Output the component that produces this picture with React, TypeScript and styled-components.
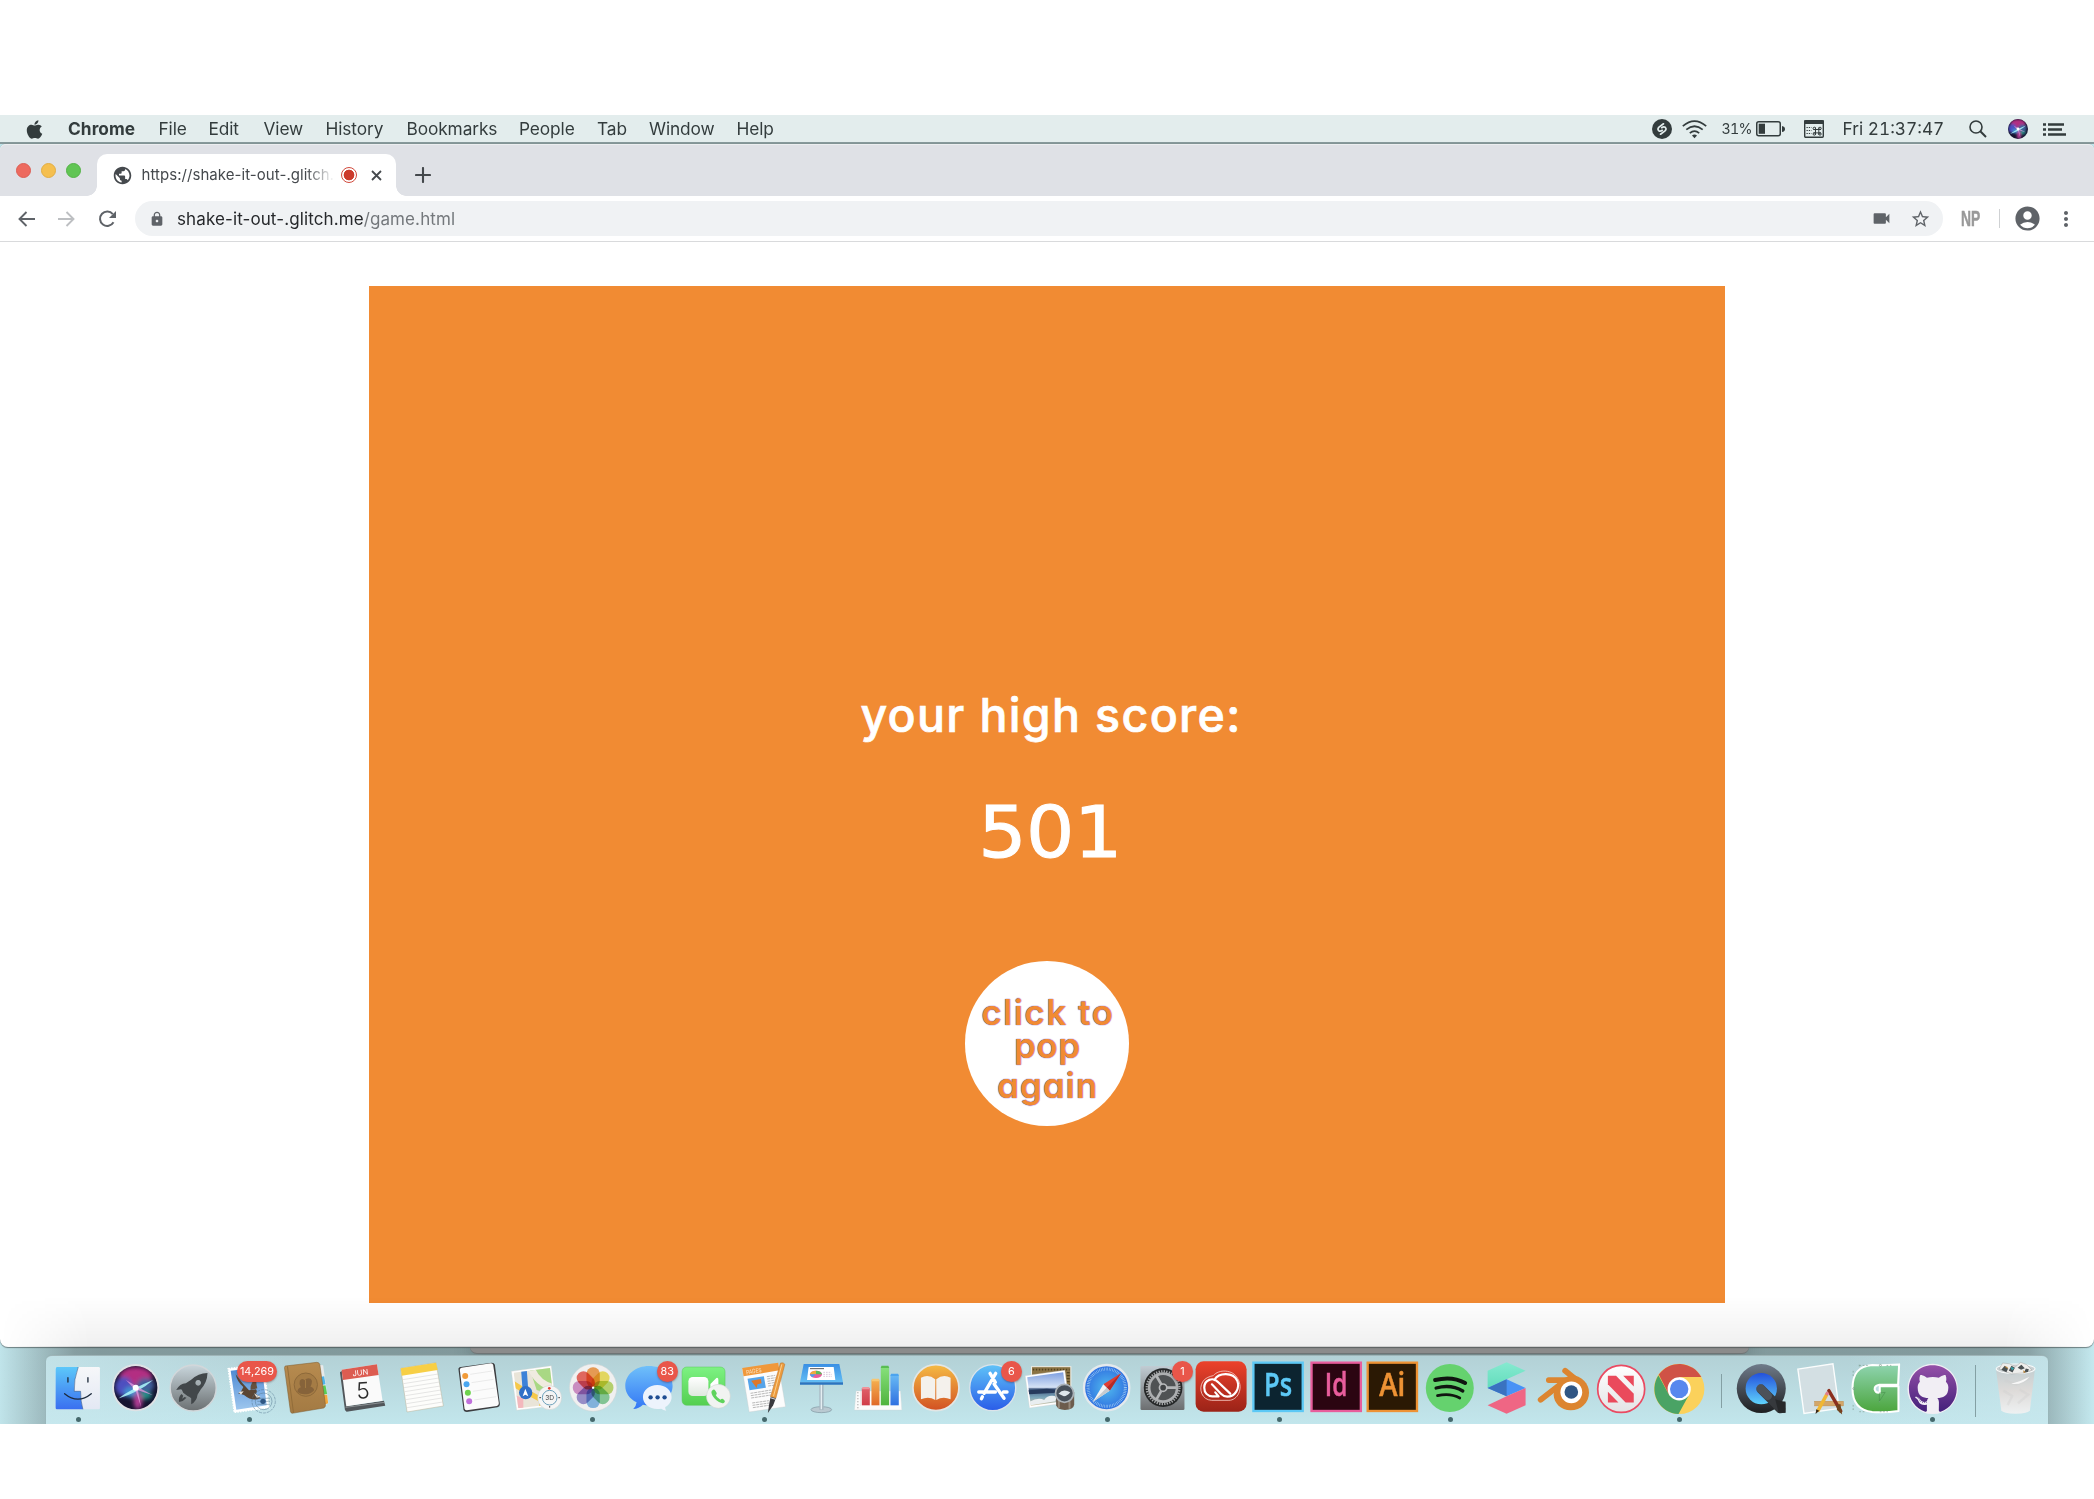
import React from 'react';
import styled, { createGlobalStyle } from 'styled-components';
import { FaApple, FaGithub } from 'react-icons/fa';
import { MdLock, MdVideocam, MdStarBorder, MdAccountCircle, MdMoreVert, MdPublic } from 'react-icons/md';

const Global = createGlobalStyle`
  * { box-sizing: border-box; }
  body { margin: 0; background: #fff; font-family: Inter, "Liberation Sans", sans-serif; }
`;

const Page = styled.main`
  width: 2094px;
  height: 1499px;
  padding-top: 115px;
  overflow: hidden;
  background: #fff;
`;

const Desktop = styled.div`
  height: 1309px;
  overflow: hidden;
  display: flex;
  flex-direction: column;
  background: linear-gradient(90deg, #c0e4ea, #b4dce2 50%, #c4e9ef);
`;

/* ---------- menu bar ---------- */

const MenuBar = styled.header`
  flex: none;
  height: 29px;
  padding: 1px 28px 0 24px;
  display: flex;
  align-items: center;
  background: #e3eded;
  border-bottom: 2px solid #87999b;
  color: #333c3d;
  font-size: 17.3px;
`;

const MenuIcon = styled.div<{ $w: number }>`
  width: ${(p) => p.$w}px;
  height: 26px;
  display: flex;
  align-items: center;
  flex: none;
`;

const MenuItem = styled.span<{ $w: number; $bold?: boolean; $ls?: number; $size?: number }>`
  flex: none;
  width: ${(p) => p.$w}px;
  white-space: nowrap;
  line-height: 26px;
  font-weight: ${(p) => (p.$bold ? 700 : 400)};
  letter-spacing: ${(p) => p.$ls ?? 0}px;
  ${(p) => (p.$size ? `font-size: ${p.$size}px;` : '')}
  font-variant-numeric: tabular-nums;
`;

const Spacer = styled.div`
  flex: 1;
`;

/* ---------- browser window ---------- */

const Window = styled.section`
  flex: none;
  height: 1203px;
  display: flex;
  flex-direction: column;
  background: #fff;
  border-radius: 6px 6px 8px 8px;
  position: relative;
  z-index: 2;
  box-shadow: 0 0.5px 1px rgba(60, 70, 70, 0.6);
`;

const TabStrip = styled.div`
  flex: none;
  height: 52px;
  display: flex;
  align-items: flex-end;
  padding-left: 16px;
  background: #dfe1e6;
  border-radius: 6px 6px 0 0;
  border-top: 1px solid #eceef0;
`;

const Lights = styled.div`
  width: 81px;
  height: 51px;
  display: flex;
  gap: 10px;
  padding-top: 18px;
`;

const Light = styled.i<{ $c: string; $b: string }>`
  width: 15px;
  height: 15px;
  border-radius: 50%;
  background: ${(p) => p.$c};
  border: 1px solid ${(p) => p.$b};
`;

const Tab = styled.div`
  width: 299px;
  height: 42px;
  position: relative;
  display: flex;
  align-items: center;
  padding-left: 14.5px;
  background: #fff;
  border-radius: 10px 10px 0 0;
  color: #45494d;
  &::before,
  &::after {
    content: '';
    position: absolute;
    bottom: 0;
    width: 10px;
    height: 10px;
  }
  &::before {
    left: -10px;
    background: radial-gradient(circle at 0 0, transparent 9.5px, #fff 10px);
  }
  &::after {
    right: -10px;
    background: radial-gradient(circle at 100% 0, transparent 9.5px, #fff 10px);
  }
`;

const TabTitle = styled.span`
  width: 193px;
  margin-left: 9px;
  white-space: nowrap;
  font-size: 15px;
  line-height: 20px;
  letter-spacing: 0.05px;
  mask-image: linear-gradient(90deg, #000 164px, transparent 192px);
`;

const RecordDot = styled.i`
  width: 16px;
  height: 16px;
  margin: 0 14px 0 6px;
  border-radius: 50%;
  border: 1.5px solid #d14a3c;
  background: radial-gradient(circle, #cc3a2b 5px, #fff 5.7px);
`;

const NewTab = styled.div`
  height: 42px;
  width: 54px;
  display: flex;
  align-items: center;
  justify-content: center;
  color: #44484c;
`;

const Toolbar = styled.div`
  flex: none;
  height: 46px;
  padding: 0 16px 0 18px;
  display: flex;
  align-items: center;
  border-bottom: 1px solid #d9dadc;
  color: #5f6368;
`;

const ToolButton = styled.div<{ $w: number; $dim?: boolean }>`
  width: ${(p) => p.$w}px;
  display: flex;
  align-items: center;
  flex: none;
  color: ${(p) => (p.$dim ? '#bdbfc2' : 'inherit')};
`;

const Omnibox = styled.div`
  width: 1808px;
  height: 35px;
  border-radius: 18px;
  background: #f0f2f4;
  display: flex;
  align-items: center;
  padding: 0 12px 0 14px;
`;

const Url = styled.span`
  margin-left: 12px;
  flex: 1;
  font-size: 17px;
  letter-spacing: 0.11px;
  color: #26282b;
  white-space: nowrap;
  em {
    font-style: normal;
    color: #74787c;
  }
`;

const Extension = styled.span`
  margin-left: 18px;
  width: 38px;
  color: #999;
  font: 700 22px 'Liberation Sans', sans-serif;
  -webkit-text-stroke: 0.5px #999;
  span {
    display: inline-block;
    transform: scaleX(0.63);
    transform-origin: 0 50%;
  }
`;

const Divider = styled.i`
  width: 1px;
  height: 19px;
  margin-right: 13px;
  background: #cfd1d3;
`;

const Viewport = styled.div`
  flex: 1;
  padding-top: 43.5px;
  display: flex;
  flex-direction: column;
  align-items: center;
  position: relative;
  &::after {
    content: '';
    position: absolute;
    left: 0;
    right: 0;
    bottom: 0;
    height: 50px;
    border-radius: 0 0 8px 8px;
    border-bottom: 1px solid #cfcfcf;
    background: linear-gradient(rgba(0, 0, 0, 0), rgba(0, 0, 0, 0.06));
    mask-image: linear-gradient(90deg, transparent, #000 90px, #000 2004px, transparent);
  }
`;

const Game = styled.div`
  width: 1356px;
  height: 1017.5px;
  background: #f18b33;
  display: flex;
  flex-direction: column;
  align-items: center;
  color: #fff;
`;

const Heading = styled.h1`
  margin: 399px 0 0 8px;
  font-family: Inter, sans-serif;
  font-size: 46.5px;
  line-height: 60px;
  font-weight: 500;
  letter-spacing: 1.35px;
  -webkit-text-stroke: 0.7px #fff;
  white-space: nowrap;
`;

const Score = styled.p`
  margin: 45px 0 0 6px;
  font-family: 'DejaVu Sans', sans-serif;
  font-size: 71px;
  line-height: 86px;
  font-weight: 400;
  letter-spacing: -0.5px;
  -webkit-text-stroke: 1px #fff;
  transform: scaleX(1.07);
`;

const PopButton = styled.button`
  margin-top: 85.5px;
  width: 164.5px;
  height: 164.5px;
  padding: 35px 0 0;
  border: 0;
  border-radius: 50%;
  background: #fff;
  display: flex;
  flex-direction: column;
  align-items: center;
  color: #f18b33;
  font-family: Inter, sans-serif;
  font-size: 35px;
  font-weight: 600;
  font-feature-settings: 'cv11' 1;
  text-shadow: 0 0 1px #6a50c8, 0 0 1px #8a62b8;
`;

const PopLine = styled.span<{ $h: number; $ls: number }>`
  height: ${(p) => p.$h}px;
  line-height: 32px;
  letter-spacing: ${(p) => p.$ls}px;
  margin-right: -${(p) => p.$ls}px;
  white-space: nowrap;
`;

/* ---------- lower strip: rear window and dock ---------- */

const Shelf = styled.div`
  flex: 1;
  display: flex;
  flex-direction: column;
  align-items: center;
  background: linear-gradient(
      90deg,
      rgba(115, 135, 137, 0) 0,
      rgba(115, 135, 137, 0.75) 75px,
      rgba(115, 135, 137, 0.8) 100px,
      rgba(115, 135, 137, 0.8) 1980px,
      rgba(115, 135, 137, 0.7) 2030px,
      rgba(115, 135, 137, 0) 2094px
    );
`;

const RearWindow = styled.div`
  flex: none;
  width: 1279px;
  height: 7px;
  margin: 0 0 1px 125px;
  background: #8b8b8b;
  border-radius: 0 0 7px 7px;
  border-bottom: 1px solid #6f7475;
  box-shadow: 0 0 16px rgba(40, 50, 50, 0.6);
`;

const DockRow = styled.nav`
  flex: none;
  width: 2002px;
  height: 69px;
  padding-left: 3.4px;
  display: flex;
  border-radius: 6px 6px 0 0;
  border-top: 1px solid #9fb5b8;
  background: linear-gradient(90deg, rgba(200, 232, 238, 0.7), transparent 12%, transparent 90%, rgba(200, 232, 238, 0.7)),
    linear-gradient(#b3d1d6, #c2e6ec);
  box-shadow: 0 0 1px #8aa3a6;
`;

const Cell = styled.div`
  position: relative;
  flex: none;
  width: 57.2px;
  height: 68.67px;
  svg {
    display: block;
    overflow: visible;
  }
`;

const RunningDot = styled.i`
  position: absolute;
  left: 26.3px;
  bottom: 2.5px;
  width: 5px;
  height: 5px;
  border-radius: 50%;
  background: #45686c;
`;

const Badge = styled.span<{ $x: number; $w: number }>`
  position: absolute;
  left: ${(p) => p.$x}px;
  top: 4.5px;
  width: ${(p) => p.$w}px;
  height: 21px;
  border-radius: 11px;
  background: #e9564a;
  color: #fff;
  font-size: 10.8px;
  line-height: 21.5px;
  text-align: center;
  box-shadow: 0 1px 2px rgba(80, 0, 0, 0.35);
`;

const DockRule = styled.div<{ $w: number; $x: number; $top: number; $h: number }>`
  flex: none;
  width: ${(p) => p.$w}px;
  padding: ${(p) => p.$top}px 0 0 ${(p) => p.$x}px;
  &::before {
    content: '';
    display: block;
    width: 1px;
    height: ${(p) => p.$h}px;
    background: #84a0a4;
  }
`;

type Stop = [string, string];
const Lin = ({ id, s }: { id: string; s: Stop[] }) => (
  <linearGradient id={id} x1="0" y1="0" x2="0" y2="1">
    {s.map(([o, c]) => <stop key={o} offset={o} stopColor={c} />)}
  </linearGradient>
);
const Rad = ({ id, s }: { id: string; s: Stop[] }) => (
  <radialGradient id={id}>
    {s.map(([o, c]) => <stop key={o} offset={o} stopColor={c} />)}
  </radialGradient>
);

const Finder = () => (
  <>
    <Lin id="fa" s={[['0', '#5cc8fa'], ['1', '#3a6ff0']]} />
    <Lin id="fb" s={[['0', '#f6f7f9'], ['1', '#e3e8f4']]} />
    <rect x="168" y="111" width="133" height="127" rx="4" fill="url(#fb)" />
    <path d="M172 111H236Q222 150 224 184H243Q243 215 250 238H172Q168 238 168 233V116Q168 111 172 111Z" fill="url(#fa)" />
    <path d="M236 111Q222 150 224 184H243Q243 215 250 238" fill="none" stroke="#2c4a78" strokeWidth="1.5" />
    <path d="M205 143v13M265 143v13M195 191Q235 224 275 191" fill="none" stroke="#1d2a3c" strokeWidth="4" strokeLinecap="round" />
  </>
);

const Orb = ({ cx, cy, r, id }: { cx: number; cy: number; r: number; id: string }) => (
  <>
    <clipPath id={id + 'c'}><circle cx={cx} cy={cy} r={r} /></clipPath>
    <filter id={id + 'f'} x="-50%" y="-50%" width="200%" height="200%"><feGaussianBlur stdDeviation={r * 0.1} /></filter>
    <circle cx={cx} cy={cy} r={r} fill="#15132f" />
    <g clipPath={`url(#${id}c)`}>
      <g filter={`url(#${id}f)`}>
        <ellipse cx={cx} cy={cy - r * 0.5} rx={r * 0.75} ry={r * 0.45} fill="#b32d82" />
        <ellipse cx={cx - r * 0.55} cy={cy - r * 0.05} rx={r * 0.4} ry={r * 0.45} fill="#4d4fc0" />
        <ellipse cx={cx + r * 0.45} cy={cy - r * 0.1} rx={r * 0.4} ry={r * 0.35} fill="#3f5f9c" />
        <ellipse cx={cx - r * 0.2} cy={cy + r * 0.2} rx={r * 0.35} ry={r * 0.25} fill="#3f8fd0" />
        <ellipse cx={cx + r * 0.4} cy={cy + r * 0.35} rx={r * 0.35} ry={r * 0.2} fill="#238b85" />
        <ellipse cx={cx + r * 0.1} cy={cy + r * 0.6} rx={r * 0.2} ry={r * 0.4} fill="#b33c95" />
      </g>
      <path d={`M${cx - r * 0.8} ${cy + r * 0.5}Q${cx - r * 0.2} ${cy + r * 0.05} ${cx + r * 0.8} ${cy - r * 0.35}Q${cx + r * 0.2} ${cy + r * 0.2} ${cx - r * 0.8} ${cy + r * 0.5}Z`} fill="#a8f1f7" opacity="0.9" />
      <path d={`M${cx - r * 0.45} ${cy - r * 0.35}L${cx + r * 0.15} ${cy}L${cx + r * 0.8} ${cy + r * 0.35}L${cx + r * 0.1} ${cy + r * 0.12}L${cx + r * 0.25} ${cy + r * 0.9}L${cx - r * 0.02} ${cy + r * 0.1}Z`} fill="#e79be0" opacity="0.75" />
      <circle cx={cx} cy={cy} r={r * 0.14} fill="#fff" />
    </g>
  </>
);

const Siri = () => (
  <>
    <circle cx="406" cy="173" r="71" fill="#dfe2e5" />
    <Orb cx={406} cy={173} r={65} id="so" />
  </>
);

const Launchpad = () => (
  <>
    <Lin id="la" s={[['0', '#c9d6dc'], ['1', '#6b7072']]} />
    <circle cx="579" cy="174" r="69" fill="url(#la)" stroke="#d2d7da" strokeWidth="4" />
    <path fillRule="evenodd" d="M622 129Q594 130 573 149L557 160Q539 161 528 180L543 178Q546 180 549 188L562 198Q569 201 573 205L573 223Q590 213 592 194L602 178Q621 157 622 129ZM594 150A8.500 8.500 0 1 1 593.900 150Z" fill="#42474a" />
    <path d="M544 192Q533 203 537 216Q550 214 559 203L553 201L546 206L549 197Z" fill="#42474a" />
  </>
);

const Mail = () => (
  <>
    <Lin id="ma" s={[['0', '#4a86d2'], ['1', '#9dc6ee']]} />
    <path d="M685 116L790 103L807 233L703 247Z" fill="#fff" stroke="#fff" strokeWidth="5" strokeDasharray="5 3" />
    <path d="M692 122L785 111L800 226L709 239Z" fill="url(#ma)" />
    <path d="M707 133Q712 157 730 171L722 187L714 190L732 195Q757 216 782 205L768 191Q773 184 768 178L747 181Q726 160 707 133Z" fill="#5a4533" />
    <path d="M752 180Q749 160 769 145Q768 162 772 175Z" fill="#65503e" />
    <path d="M716 186l15-2-8 10zM762 190l20 11-12 2z" fill="#e9e2d8" />
    <g fill="none" stroke="#53768f" strokeWidth="2.500" opacity="0.6">
      <circle cx="791" cy="214" r="35" strokeDasharray="9 3" />
      <circle cx="791" cy="214" r="25" />
      <path d="M772 205h38M772 214h38M772 223h38" />
    </g>
    <circle cx="789" cy="214" r="8" fill="#2f5683" />
  </>
);

const Contacts = () => (
  <>
    <Lin id="ca" s={[['0', '#b78b4f'], ['1', '#a37a43']]} />
    <path d="M955 105L970 106L986 220L965 232Z" fill="#e8eaea" />
    <path d="M961 141l12-2 4 24-12 2z" fill="#4db4ea" />
    <path d="M965 168l12-2 5 26-13 2z" fill="#58ce57" />
    <path d="M969 195l13-1 3 26-12 4z" fill="#f2a83c" />
    <path d="M856 108L951 97Q958 97 960 103L977 224Q978 231 972 234L877 250Q873 249 872 245L854 113Z" fill="url(#ca)" stroke="#7c5a2d" strokeWidth="1.5" />
    <path d="M863 109L881 248" stroke="#8d6936" strokeWidth="2.500" />
    <circle cx="918" cy="164" r="35" fill="#a57c45" stroke="#8e693a" strokeWidth="3" />
    <path d="M893 186Q893 175 903 172Q897 160 900 152Q906 142 915 151Q922 142 932 146Q941 151 932 170Q943 173 943 181Q932 193 919 193Q903 194 893 186Z" fill="#86633a" />
    <path d="M917 150v24" stroke="#a57c45" strokeWidth="3" />
  </>
);

const Calendar = () => (
  <>
    <path d="M1021 127L1030 120L1044 228L1153 212L1157 227L1041 245L1036 240Z" fill="#51565a" />
    <path d="M1038 232L1155 217" stroke="#a8adaf" strokeWidth="2" />
    <path d="M1026 119L1132 103L1149 212L1040 229Z" fill="#fafafa" />
    <path d="M1026 119L1132 103L1137 135L1030 150Z" fill="#dc5c51" />
    <g fontFamily="Inter, sans-serif" textAnchor="middle">
      <text x="1082" y="136" fontSize="23" fill="#fff" transform="rotate(-6 1082 128)">JUN</text>
      <text x="1090" y="206" fontSize="68" fontWeight="300" fill="#2c2c2c" transform="rotate(-4 1090 182)">5</text>
    </g>
  </>
);

const Notes = () => (
  <>
    <path d="M31 115L137 98L159 228L50 246Z" fill="#fdfdfb" stroke="#b8b095" strokeWidth="1.5" />
    <path d="M31 115L137 98L142 120L34 137Z" fill="#f7cf45" />
    <path d="M37 149l107-17M39 161l107-17M41 173l107-17M43 185l107-17M45 197l107-17M46 209l107-17M48 221l107-17M50 233l107-17" stroke="#cdcdcd" strokeWidth="1.5" />
  </>
);

const Reminders = () => (
  <>
    <path d="M205 120Q203 112 212 111L305 98Q312 98 314 104L329 223Q329 230 322 232L230 246Q222 246 220 240Z" fill="#3c3d40" />
    <path d="M209 121Q207 115 214 113L302 100Q308 100 309 105L326 220Q326 226 320 228L230 241Q225 241 223 236Z" fill="#fbfbfb" />
    <path d="M240 133l66-10M244 158l66-10M248 184l66-10M252 210l66-10" stroke="#d8d8d8" strokeWidth="1.500" />
    <circle cx="225" cy="138" r="9" fill="#f19a38" /><circle cx="229" cy="163" r="9" fill="#4aa6f0" />
    <circle cx="233" cy="188" r="9" fill="#6fd24e" /><circle cx="237" cy="214" r="9" fill="#c070dc" />
  </>
);

const Maps = () => (
  <>
    <clipPath id="mp"><path d="M371 128L480 114L492 222L385 235Z" /></clipPath>
    <path d="M364 124L484 107L498 227L380 241Z" fill="#fdfdfd" stroke="#cfcfc8" strokeWidth="1" />
    <g clipPath="url(#mp)">
      <rect x="360" y="100" width="140" height="145" fill="#e9e4d8" />
      <path d="M415 105H500V200L440 180Z" fill="#a9d884" />
      <path d="M420 105Q440 165 500 175" fill="none" stroke="#f0ebe0" strokeWidth="20" />
      <path d="M368 160L400 180L455 210V245" fill="none" stroke="#f6c94a" strokeWidth="16" />
      <path d="M375 195L400 205V245H375Z" fill="#f3b8bd" />
      <path d="M401 108L407 190" stroke="#3d82d8" strokeWidth="17" />
    </g>
    <circle cx="407" cy="188" r="20" fill="#2f70c8" />
    <path d="M406 176l9 23-9-5-8 5z" fill="#fff" />
    <circle cx="479" cy="203" r="36" fill="#f5f5f5" stroke="#c7cccd" strokeWidth="1.500" />
    <circle cx="479" cy="203" r="22" fill="none" stroke="#6a9fba" strokeWidth="3" />
    <circle cx="478" cy="175" r="4" fill="#e03a2f" />
    <path d="M448 203h5M505 203h5M479 228v5" stroke="#444" strokeWidth="3" />
    <text x="479" y="210" fontSize="20" textAnchor="middle" fill="#444" fontFamily="Inter, sans-serif">3D</text>
  </>
);

const PhotoPetal = styled.rect`
  mix-blend-mode: multiply;
`;
const petals = ['#f3943a', '#efe04a', '#b4d65a', '#77c98c', '#74b0e6', '#9183cc', '#cf84c4', '#ea5348'];
const Photos = () => (
  <>
    <circle cx="610" cy="173" r="71" fill="#f0f0f0" stroke="#d0d2d3" strokeWidth="1.500" />
    {petals.map((c, i) => (
      <PhotoPetal key={c} x="590" y="112" width="40" height="60" rx="19" fill={c} opacity="0.85" transform={`rotate(${i * 45} 610 173)`} />
    ))}
    <circle cx="610" cy="173" r="3.500" fill="#fff" />
  </>
);

const Messages = () => (
  <>
    <Lin id="me" s={[['0', '#6fc0fa'], ['1', '#3377f5']]} />
    <path d="M778 108C820 108 849 134 849 167C849 200 818 226 778 226Q768 226 760 224Q748 236 731 237Q740 228 741 217C720 206 707 189 707 167C707 134 738 108 778 108Z" fill="url(#me)" />
    <path d="M803 165C828 165 846 181 846 201C846 214 839 225 827 231Q826 238 830 242Q821 241 815 236Q809 237 803 237C779 237 760 221 760 201C760 181 779 165 803 165Z" fill="#edf3fc" />
    <circle cx="783" cy="202" r="6.500" fill="#1f4d92" /><circle cx="804" cy="202" r="6.500" fill="#1f4d92" /><circle cx="825" cy="202" r="6.500" fill="#1f4d92" />
  </>
);

const FaceTime = () => (
  <>
    <Lin id="ft" s={[['0', '#7df283'], ['1', '#54cf50']]} />
    <Lin id="fw" s={[['0', '#ffffff'], ['1', '#dfe8df']]} />
    <rect x="878" y="111" width="129" height="115" rx="14" fill="url(#ft)" stroke="#5cc65c" strokeWidth="1.500" />
    <rect x="897" y="141" width="60" height="57" rx="13" fill="url(#fw)" />
    <path d="M963 162L981 144Q987 142 987 150V190H963Z" fill="#fff" />
    <circle cx="987" cy="199" r="36" fill="#f1f3f1" stroke="#c9cecb" strokeWidth="1.500" />
    <path d="M970 180Q974 176 978 182L982 189Q983 193 979 195Q982 203 993 209Q997 205 1001 207L1006 212Q1008 216 1003 219Q994 222 981 211Q967 199 966 187Q966 183 970 180Z" fill="#5fd35c" />
  </>
);

const Pages = () => (
  <>
    <path d="M1056 117L1164 100L1186 230L1077 246Z" fill="#fcfcfc" stroke="#c9c9c9" strokeWidth="1" />
    <path d="M1056 114L1164 98L1168 121L1060 139Z" fill="#f0983a" />
    <text x="1091" y="130" fontSize="18" textAnchor="middle" fill="#fbe3c4" fontFamily="Inter, sans-serif" transform="rotate(-9 1091 124)" textLength="46" lengthAdjust="spacingAndGlyphs">PAGES</text>
    <path d="M1072 146L1121 139L1127 173L1078 181Z" fill="#55a4ea" />
    <path d="M1083 152L1112 147L1114 160L1102 163L1099 174L1091 163Z" fill="#e0782a" />
    <path d="M1130 140l25-4M1131 147l25-4M1132 154l24-4M1133 161l24-4M1134 168l21-3M1081 190l62-10M1082 197l62-10M1083 204l60-9M1086 219l50-7M1087 226l50-7M1088 233l48-7" stroke="#aaa" strokeWidth="2.500" strokeDasharray="9 2" />
    <path d="M1171 99Q1180 96 1184 103L1157 205L1141 200Z" fill="#ec9a3c" stroke="#b5702a" strokeWidth="1.5" />
    <path d="M1175 103L1150 199" stroke="#fbd08f" strokeWidth="3" />
    <path d="M1141 200L1157 205L1149 226L1133 249L1137 222Z" fill="#3a3a3e" />
    <path d="M1140 203l16 5" stroke="#ddd" strokeWidth="3" />
  </>
);

const Keynote = () => (
  <>
    <Lin id="ky" s={[['0', '#3a8fe4'], ['1', '#62bdf4']]} />
    <ellipse cx="124" cy="239" rx="31" ry="9" fill="#b9c9d1" stroke="#7f95a0" strokeWidth="2" />
    <path d="M118 160h13v80h-13z" fill="#a9bac3" /><path d="M122 162h4v76h-4z" fill="#e5eef2" />
    <path d="M71 102H178L189 157H60Z" fill="url(#ky)" /><path d="M60 157H189V164H60Z" fill="#2b74c0" />
    <path d="M86 111H161L166 150H81Z" fill="#fff" />
    <path d="M90 116h42" stroke="#555" strokeWidth="3" />
    <ellipse cx="108" cy="133" rx="18" ry="11" fill="#ea5c9c" /><path d="M108 133L90 133Q92 122 108 122Z" fill="#efaa3d" /><path d="M108 133V122Q124 123 126 133Z" fill="#5bbd5a" /><path d="M108 133L97 142Q90 138 90 133Z" fill="#4aa0ee" />
    <path d="M130 127h24M130 133h26M130 139h26" stroke="#d9c9dc" strokeWidth="3" strokeDasharray="5 3" />
  </>
);

const Numbers = () => (
  <>
    <Lin id="n1" s={[['0', '#e0606a'], ['1', '#d03c48']]} /><Lin id="n2" s={[['0', '#f5b050'], ['1', '#e06a28']]} />
    <Lin id="n3" s={[['0', '#86e07c'], ['1', '#50b33e']]} /><Lin id="n4" s={[['0', '#68baf5'], ['1', '#2f70e0']]} />
    <path d="M229 183H362L366 240H224Z" fill="#fbfbfb" stroke="#d3d8d9" strokeWidth="1" />
    <path d="M234 187v50" stroke="#b7b7b7" strokeWidth="5" strokeDasharray="3 6" /><path d="M242 184v44" stroke="#ccc" strokeWidth="1" />
    <rect x="246" y="174" width="24" height="52" fill="url(#n1)" /><path d="M248 171h20l2 7h-24z" fill="#ef939a" />
    <rect x="275" y="149" width="24" height="77" fill="url(#n2)" /><path d="M277 146h20l2 8h-24z" fill="#f7c673" />
    <rect x="303" y="111" width="25" height="115" fill="url(#n3)" /><path d="M305 107h21l2 7h-25z" fill="#59bd53" />
    <rect x="332" y="134" width="25" height="92" fill="url(#n4)" /><path d="M334 131h21l2 7h-25z" fill="#4ca4ee" />
  </>
);

const Books = () => (
  <>
    <Lin id="bk" s={[['0', '#f5bb44'], ['1', '#d25022']]} />
    <circle cx="469" cy="173" r="69" fill="url(#bk)" stroke="#e2e6e5" strokeWidth="5" />
    <path d="M467 148Q447 131 424 143V208Q447 198 467 210Z" fill="#f4f1ec" />
    <path d="M470 148Q490 131 513 143V208Q490 198 470 210Z" fill="#f4f1ec" />
  </>
);

const AppStore = () => (
  <>
    <Lin id="as" s={[['0', '#5fc3f8'], ['1', '#2a5ce8']]} />
    <circle cx="640" cy="173" r="69" fill="url(#as)" stroke="#dbe4ea" strokeWidth="4" />
    <g stroke="#fff" strokeWidth="10" strokeLinecap="round" fill="none">
      <path d="M632 130L648 157M649 130L614 190M609 200L606 206M644 162L674 205M598 186H648M672 186H683" />
    </g>
  </>
);

const Preview = () => (
  <>
    <Lin id="pv" s={[['0', '#7e9fe0'], ['0.45', '#d5e2f5'], ['0.5', '#41587e'], ['0.75', '#7aa5b9'], ['1', '#d8c9a6']]} />
    <rect x="754" y="110" width="118" height="112" fill="#8a7344" stroke="#f1efe8" strokeWidth="3" />
    <path d="M758 119h110M862 126v70M866 126v70" stroke="#53421f" strokeWidth="5" strokeDasharray="4 5" />
    <path d="M735 137L854 121L867 217L748 234Z" fill="#fff" stroke="#cfcfcf" strokeWidth="1" />
    <path d="M741 142L849 127L861 212L752 227Z" fill="url(#pv)" />
    <path d="M745 181L800 176L857 182V187L747 193Z" fill="#263a5c" />
    <path d="M748 215Q775 200 792 210Q804 192 830 200L825 214L752 226Z" fill="#e9eef0" />
    <path d="M827 189L828 226Q832 240 854 240Q880 239 882 224V186Z" fill="#6c5c4d" />
    <path d="M836 210v25M868 211v25" stroke="#96897a" strokeWidth="6" />
    <circle cx="853" cy="190" r="27" fill="#47505a" stroke="#aab1b7" strokeWidth="5" />
    <path d="M835 191Q849 174 870 187Q862 198 851 199Z" fill="#dde6ec" />
  </>
);

const Safari = () => (
  <>
    <Rad id="sa" s={[['0', '#50b9ee'], ['1', '#2f6fe0']]} />
    <circle cx="980" cy="173" r="68" fill="url(#sa)" stroke="#e4e9ec" strokeWidth="7" />
    <circle cx="980" cy="173" r="56" fill="none" stroke="#a5d0f3" strokeWidth="9" strokeDasharray="1.600 3.300" />
    <path d="M1023 130L970 163L989 182Z" fill="#df3f34" /><path d="M1023 130L980 173L989 182Z" fill="#b52a26" />
    <path d="M938 216L970 163L989 182Z" fill="#f3f3f3" /><path d="M938 216L980 173L989 182Z" fill="#c5cbd0" />
  </>
);

const Preferences = () => (
  <>
    <Lin id="pr" s={[['0', '#c1ccd3'], ['1', '#6c6e70']]} />
    <rect x="1082" y="108" width="132" height="132" rx="4" fill="url(#pr)" />
    <circle cx="1150" cy="173" r="58" fill="#262829" />
    <circle cx="1150" cy="173" r="49" fill="none" stroke="#a6a8aa" strokeWidth="7" strokeDasharray="4 3.700" />
    <circle cx="1150" cy="173" r="42" fill="#4f5254" stroke="#acaeb0" strokeWidth="8" />
    <path d="M1150 173L1190 173M1150 173L1130 138M1150 173L1130 208" stroke="#b3b5b7" strokeWidth="8" />
    <circle cx="1150" cy="173" r="11" fill="#414446" stroke="#b8babc" strokeWidth="5" />
  </>
);

const CreativeCloud = () => (
  <>
    <Lin id="cc" s={[['0', '#ec422b'], ['1', '#9b2318']]} />
    <rect x="78" y="94" width="153" height="151" rx="24" fill="url(#cc)" />
    <path d="M131 137C147 117 190 118 204 145C223 177 203 211 178 211H126C97 210 86 177 99 156C105 145 119 139 131 137Z" fill="none" stroke="#f7cfc8" strokeWidth="2.500" />
    <path d="M137 187L147 199H128C114 199 104 188 104 173C104 150 130 139 146 157L182 191M134 150C148 127 190 126 203 152C212 176 196 200 173 200C164 200 159 196 154 191L127 163" fill="none" stroke="#fff" strokeWidth="6.500" strokeLinecap="round" strokeLinejoin="round" />
  </>
);

const Adobe = ({ x, t, c, bg, w }: { x: number; t: string; c: string; bg: string; w: number }) => (
  <>
    <rect x={x + 3} y="98" width="148" height="145" fill={bg} stroke={c} strokeWidth="7" />
    <text x={x + 77} y="199" fontSize="98" fontWeight="600" textAnchor="middle" fill={c} stroke={c} strokeWidth="1.500" fontFamily="'Open Sans', 'Noto Sans', sans-serif" textLength={w} lengthAdjust="spacingAndGlyphs">{t}</text>
  </>
);

const Spotify = () => (
  <>
    <circle cx="840" cy="174" r="72" fill="#65d26e" />
    <g fill="none" stroke="#101510" strokeLinecap="round">
      <path d="M796 150Q847 137 886 159" strokeWidth="12" />
      <path d="M799 174Q844 162 879 183" strokeWidth="10" />
      <path d="M803 197Q841 188 870 204" strokeWidth="8" />
    </g>
  </>
);

const SparkAR = () => (
  <>
    <Lin id="sp" s={[['0', '#86ead0'], ['1', '#62dcbc']]} />
    <path d="M1011 97L1068 122L1011 148L954 174V122Z" fill="url(#sp)" />
    <path d="M1011 148L1068 174L1011 199L954 174Z" fill="#4892f5" /><path d="M1011 148V199L954 174Z" fill="#3a72c0" />
    <path d="M1068 174V226L1011 251L954 226L1011 199Z" fill="#ef6684" />
  </>
);

/* Artwork drawn on the slightly smaller grid, brought up to dock scale. */
const Grown = ({ children }: { children: React.ReactNode }) => <g transform="scale(1.0217)">{children}</g>;

const Blender = () => (
  <Grown>
    <g stroke="#dc8530" strokeWidth="17" strokeLinecap="round" fill="none">
      <path d="M17 120L60 155M-31 147H33M-55 205L10 154" />
    </g>
    <path d="M34 132C66 134 87 157 87 184C87 213 63 236 33 236C4 236 -16 214 -17 190Q-14 160 10 143Z" fill="#dc8530" />
    <circle cx="35" cy="183" r="32" fill="#fff" /><circle cx="35" cy="182" r="20" fill="#305684" />
  </Grown>
);

const News = () => (
  <Grown>
    <Lin id="nw" s={[['0', '#ffffff'], ['1', '#e3e3e5']]} />
    <circle cx="182" cy="173" r="69" fill="url(#nw)" stroke="#ea4a62" strokeWidth="5" />
    <path d="M143 134H167L219 187V213H195L143 159Z" fill="#ea4a5c" />
    <path d="M188 134H219V166ZM143 181V213H174Z" fill="#ea4a5c" />
  </Grown>
);

const Chrome = () => (
  <Grown>
    <circle cx="350" cy="173" r="74" fill="#fbd15b" />
    <path d="M350 173V138H415A74 74 0 0 0 290 131L320 190Z" fill="#cf5246" />
    <path d="M289 133A74 74 0 0 0 348 247L379 190L350 173L320 190Z" fill="#4aa365" />
    <circle cx="350" cy="173" r="34" fill="#fff" /><circle cx="350" cy="173" r="27" fill="#5788ee" />
  </Grown>
);

const QuickTime = () => (
  <Grown>
    <Lin id="qt" s={[['0', '#6f7b8a'], ['1', '#1d1e20']]} />
    <Lin id="qb" s={[['0', '#2350dc'], ['1', '#5fd2fb']]} />
    <circle cx="591" cy="172" r="72" fill="url(#qt)" />
    <path d="M630 210H662V243H640L606 210Z" fill="#252628" />
    <circle cx="591" cy="172" r="46" fill="url(#qb)" />
    <path d="M590 173L648 231" stroke="#36393d" strokeWidth="27" strokeLinecap="round" />
    <path d="M632 203L662 213V243H642Z" fill="#26282a" />
    <path d="M589 172L610 193" stroke="#5b646d" strokeWidth="25" strokeLinecap="round" opacity="0.6" />
  </Grown>
);

const Applications = () => (
  <Grown>
    <path d="M699 115L802 99L820 230L717 245Z" fill="#d3dfe3" stroke="#fbfdfd" strokeWidth="4" />
    <rect x="748" y="209" width="85" height="14" fill="#d3a669" stroke="#b58445" strokeWidth="1" />
    <path d="M790 178L825 238" stroke="#8c2e1d" strokeWidth="10" strokeLinecap="round" /><path d="M812 220l12-3 5 31-15-13z" fill="#70451f" />
    <path d="M784 189L757 239" stroke="#f0b733" strokeWidth="10" /><path d="M787 183l-4 8" stroke="#e17e8a" strokeWidth="10" /><path d="M751 247l2-14 9 4z" fill="#3a2b1c" />
  </Grown>
);

const Glyphs = () => (
  <Grown>
    <Lin id="gl" s={[['0', '#8fd4b0'], ['1', '#4ba53c']]} />
    <path d="M997 101L994 160L939 161Q925 163 925 174Q928 186 940 184V165H995V238Q960 243 918 241C875 236 860 210 860 172C860 129 877 106 918 103Q950 104 997 101Z" fill="url(#gl)" stroke="#fff" strokeWidth="6" strokeLinejoin="round" />
    <path d="M939 185V209L956 183Z" fill="none" stroke="#448b4a" strokeWidth="1.500" />
    <g fill="none" stroke="#7d9c8d" strokeWidth="2"><circle cx="942" cy="104" r="3" /><path d="M880 102v6M880 104h28M862 120v20M862 220v18M880 240h20M940 240h24M960 104h14M939 209v3" strokeDasharray="5 5" /><circle cx="864" cy="172" r="3" /></g>
  </Grown>
);

const GitHub = () => (
  <Grown>
    <Lin id="gh" s={[['0', '#9550a8'], ['1', '#43207a']]} />
    <circle cx="1096" cy="173" r="74" fill="#f1eef4" />
    <FaGithub x={1024} y={101} size={145} fill="url(#gh)" />
  </Grown>
);

const Trash = () => (
  <Grown>
    <Lin id="tr" s={[['0', '#c3ced1'], ['0.5', '#dedbd9'], ['1', '#eef1f2']]} />
    <path d="M1280 113L1296 236Q1301 246 1338 246Q1375 246 1380 236L1395 113Z" fill="url(#tr)" />
    <ellipse cx="1338" cy="114" rx="57" ry="14" fill="#c9d0d2" stroke="#f8fafa" strokeWidth="3" />
    <path d="M1290 114L1300 97L1319 99L1338 108L1353 95L1371 102L1386 118L1360 126L1325 129Z" fill="#eeeeec" stroke="#888" strokeWidth="1" />
    <path d="M1296 117l10-12 10 8-5 11zM1318 119l8-14 10 6-7 14zM1344 111l11-9 10 10-11 5zM1368 113l9 2-3 8-11 2z" fill="#4b5254" />
    <path d="M1304 107l9 1 4 7zM1360 118l8 5-6 4z" fill="#b8843a" /><path d="M1324 108l10 4-7 7z" fill="#35a4aa" />
    <path d="M1306 148L1340 160L1380 142M1302 178L1328 194L1315 220M1350 175L1375 190L1345 215" stroke="#cfcecd" strokeWidth="7" fill="none" opacity="0.35" />
    <path d="M1325 158Q1355 150 1379 137Q1359 162 1325 158Z" fill="#f8f8f8" />
  </Grown>
);

type DockItem = { name: string; x: number; art: React.ReactNode; on?: boolean; badge?: [string, number, number] };

const mainApps: DockItem[] = [
  { name: 'finder', x: 148.2, art: <Finder />, on: true },
  { name: 'siri', x: 319.8, art: <Siri /> },
  { name: 'launchpad', x: 491.4, art: <Launchpad /> },
  { name: 'mail', x: 663, art: <Mail />, on: true, badge: ['14,269', 16, 40] },
  { name: 'contacts', x: 834.6, art: <Contacts /> },
  { name: 'calendar', x: 1006.2, art: <Calendar /> },
  { name: 'notes', x: 7.8, art: <Notes /> },
  { name: 'reminders', x: 179.4, art: <Reminders /> },
  { name: 'maps', x: 351, art: <Maps /> },
  { name: 'photos', x: 522.6, art: <Photos />, on: true },
  { name: 'messages', x: 694.2, art: <Messages />, badge: ['83', 35.5, 21] },
  { name: 'facetime', x: 865.8, art: <FaceTime /> },
  { name: 'pages', x: 1037.4, art: <Pages />, on: true },
  { name: 'keynote', x: 39, art: <Keynote /> },
  { name: 'numbers', x: 210.6, art: <Numbers /> },
  { name: 'books', x: 382.2, art: <Books /> },
  { name: 'appstore', x: 553.8, art: <AppStore />, badge: ['6', 36.5, 21] },
  { name: 'preview', x: 725.4, art: <Preview /> },
  { name: 'safari', x: 897, art: <Safari />, on: true },
  { name: 'preferences', x: 1068.6, art: <Preferences />, badge: ['1', 36, 21] },
  { name: 'creativecloud', x: 70.2, art: <CreativeCloud /> },
  { name: 'photoshop', x: 241.8, art: <Adobe x={249} t="Ps" c="#5cc8f5" bg="#0c2430" w={84} />, on: true },
  { name: 'indesign', x: 413.4, art: <Adobe x={421} t="Id" c="#e85d9c" bg="#2b0511" w={68} /> },
  { name: 'illustrator', x: 585, art: <Adobe x={590} t="Ai" c="#ee9234" bg="#2b1904" w={78} /> },
  { name: 'spotify', x: 756.6, art: <Spotify />, on: true },
  { name: 'spark', x: 928.2, art: <SparkAR /> },
  { name: 'blender', x: -70.2, art: <Blender /> },
  { name: 'news', x: 101.4, art: <News /> },
  { name: 'chrome', x: 273, art: <Chrome />, on: true },
];

const recentApps: DockItem[] = [
  { name: 'quicktime', x: 519, art: <QuickTime /> },
  { name: 'applications', x: 690.6, art: <Applications /> },
  { name: 'glyphs', x: 862.2, art: <Glyphs /> },
  { name: 'github', x: 1033.8, art: <GitHub />, on: true },
];

const DockApp = ({ app }: { app: DockItem }) => (
  <Cell>
    <svg width="57.2" height="68.67" viewBox={`${app.x} 78 171.6 206`}>{app.art}</svg>
    {app.badge && <Badge $x={app.badge[1]} $w={app.badge[2]}>{app.badge[0]}</Badge>}
    {app.on && <RunningDot />}
  </Cell>
);

const menus: [string, number][] = [
  ['File', 50], ['Edit', 55], ['View', 62], ['History', 81], ['Bookmarks', 112.5],
  ['People', 78], ['Tab', 52], ['Window', 87.5], ['Help', 60],
];

export default function App() {
  return (
    <Page>
      <Global />
      <Desktop>
        <MenuBar>
          <MenuIcon $w={44}><FaApple size={21} /></MenuIcon>
          <MenuItem $w={90.5} $bold $ls={0.05}>Chrome</MenuItem>
          {menus.map(([t, w]) => <MenuItem key={t} $w={w} $ls={-0.1}>{t}</MenuItem>)}
          <Spacer />
          <MenuIcon $w={30}>
            <svg width="20" height="20" viewBox="0 0 20 20">
              <circle cx="10" cy="10" r="10" fill="#333c3d" />
              <path d="M11.500 4.800L7 8.100Q5 10 6.800 11.700Q8.300 12.700 10.300 11.300M8.500 15.200L13 11.900Q15 10 13.200 8.300Q11.700 7.300 9.700 8.700" fill="none" stroke="#e3eded" strokeWidth="1.700" strokeLinecap="round" />
            </svg>
          </MenuIcon>
          <MenuIcon $w={39.5}>
            <svg width="25" height="19" viewBox="0 0 25 19" fill="none" stroke="#333c3d" strokeWidth="1.700">
              <path d="M.8 6.200Q12.500-4 24.200 6.200M4.300 9.700Q12.500 2.800 20.700 9.700M7.800 13.200Q12.500 9.200 17.200 13.200" />
              <path d="M10 15.600Q12.500 13.600 15 15.600L12.500 18.200Z" fill="#333c3d" stroke="none" />
            </svg>
          </MenuIcon>
          <MenuItem $w={34.5} $size={14.3} $ls={-0.75}>31%</MenuItem>
          <MenuIcon $w={48}>
            <svg width="29" height="16" viewBox="0 0 29 16">
              <rect x=".75" y=".75" width="23.500" height="14" rx="2" fill="none" stroke="#333c3d" strokeWidth="1.500" />
              <rect x="2.700" y="2.700" width="6.300" height="10.100" fill="#333c3d" /><path d="M26 5q3 .5 3 3t-3 3z" fill="#333c3d" />
            </svg>
          </MenuIcon>
          <MenuIcon $w={38.5}>
            <svg width="20" height="18" viewBox="0 0 20 18" fill="none" stroke="#333c3d">
              <rect x=".7" y=".7" width="18.600" height="16.600" rx="1" strokeWidth="1.400" />
              <path d="M0 2.200H20" strokeWidth="3.600" /><path d="M2.500 7.500h5M2.500 10.500h5M2.500 13.500h5" strokeWidth="1.200" strokeDasharray="1.300 1" />
              <path d="M11.500 7.500v7.400M14.800 7.500v7.400M9.400 9.500h7.600M9.400 12.900h7.600" strokeWidth="1" /><g strokeWidth="1"><circle cx="10.300" cy="8.400" r="1.200" /><circle cx="16" cy="8.400" r="1.200" /><circle cx="10.300" cy="14" r="1.200" /><circle cx="16" cy="14" r="1.200" /></g>
            </svg>
          </MenuIcon>
          <MenuItem $w={126} $ls={0}>Fri 21:37:47</MenuItem>
          <MenuIcon $w={39.5}>
            <svg width="18" height="18" viewBox="0 0 18 18" fill="none" stroke="#333c3d" strokeWidth="1.600">
              <circle cx="7" cy="7" r="6" /><path d="M11.300 11.300L17 17" strokeWidth="2" />
            </svg>
          </MenuIcon>
          <MenuIcon $w={35}><svg width="20" height="20" viewBox="0 0 20 20"><Orb cx={10} cy={10} r={10} id="mb" /></svg></MenuIcon>
          <MenuIcon $w={23}>
            <svg width="23" height="13" viewBox="0 0 23 13" stroke="#333c3d" strokeWidth="2.600">
              <path d="M0 1.500h3M0 6.500h3M0 11.500h3M5 1.500h16M5 6.500h14M5 11.500h18" />
            </svg>
          </MenuIcon>
        </MenuBar>

        <Window>
          <TabStrip>
            <Lights>
              <Light $c="#ed6a5f" $b="#dd5d53" /><Light $c="#f5bf4f" $b="#e2ad43" /><Light $c="#61c554" $b="#53b346" />
            </Lights>
            <Tab>
              <MdPublic size={21} />
              <TabTitle>https://shake-it-out-.glitch.</TabTitle>
              <RecordDot />
              <svg width="11" height="11" viewBox="0 0 11 11" stroke="currentColor" strokeWidth="1.800"><path d="M1 1L10 10M10 1L1 10" /></svg>
            </Tab>
            <NewTab>
              <svg width="16" height="16" viewBox="0 0 16 16" stroke="currentColor" strokeWidth="2.100" strokeLinecap="round"><path d="M8 1V15M1 8H15" /></svg>
            </NewTab>
          </TabStrip>
          <Toolbar>
            <ToolButton $w={40}>
              <svg width="17" height="16" viewBox="0 0 17 16" fill="none" stroke="currentColor" strokeWidth="1.900"><path d="M17 8H1.500M8.500 1L1.500 8L8.500 15" /></svg>
            </ToolButton>
            <ToolButton $w={40} $dim>
              <svg width="17" height="16" viewBox="0 0 17 16" fill="none" stroke="currentColor" strokeWidth="1.900"><path d="M0 8H15.500M8.500 1L15.500 8L8.500 15" /></svg>
            </ToolButton>
            <ToolButton $w={37}>
              <svg width="19" height="18" viewBox="0 0 19 18" fill="none" stroke="currentColor" strokeWidth="2"><path d="M15.500 12.300A7.200 7.200 0 1 1 14.800 4.200" /><path d="M18 1V8H11L18 1Z" fill="currentColor" stroke="none" /></svg>
            </ToolButton>
            <Omnibox>
              <MdLock size={16} />
              <Url>shake-it-out-.glitch.me<em>/game.html</em></Url>
              <ToolButton $w={39.5}><MdVideocam size={21} /></ToolButton>
              <ToolButton $w={21}><MdStarBorder size={22} /></ToolButton>
            </Omnibox>
            <Extension><span>NP</span></Extension>
            <Divider />
            <ToolButton $w={41}><MdAccountCircle size={29} /></ToolButton>
            <MdMoreVert size={24} />
          </Toolbar>
          <Viewport>
            <Game>
              <Heading>your high score:</Heading>
              <Score>501</Score>
              <PopButton>
                <PopLine $h={33} $ls={1.5}>click to</PopLine>
                <PopLine $h={39.5} $ls={0.6}>pop</PopLine>
                <PopLine $h={40} $ls={1}>again</PopLine>
              </PopButton>
            </Game>
          </Viewport>
        </Window>

        <Shelf>
          <RearWindow />
          <DockRow>
            {mainApps.map((a) => <DockApp key={a.name} app={a} />)}
            <DockRule $w={24.8} $x={12.9} $top={18} $h={34} />
            {recentApps.map((a) => <DockApp key={a.name} app={a} />)}
            <DockRule $w={25.27} $x={13.3} $top={8.5} $h={52} />
            <DockApp app={{ name: 'trash', x: 1281.2, art: <Trash /> }} />
          </DockRow>
        </Shelf>
      </Desktop>
    </Page>
  );
}
